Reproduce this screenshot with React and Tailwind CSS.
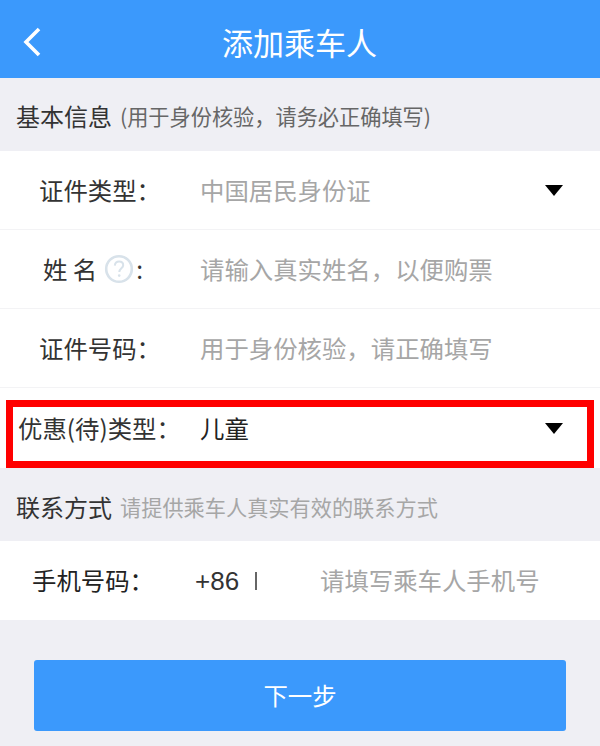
const font = "font-['Noto_Sans_CJK_SC','Noto_Sans',sans-serif]";

function Caret() {
  return (
    <svg width="18" height="11" viewBox="0 0 18 11" className="shrink-0">
      <path d="M0 0H18L9 11Z" fill="#000" />
    </svg>
  );
}

function Help() {
  return (
    <svg width="30" height="30" viewBox="0 0 30 30" className="shrink-0">
      <circle cx="15" cy="15" r="12.8" fill="none" stroke="#d8e2ea" strokeWidth="2.6" />
      <path d="M10.8 11.6c.3-2.6 2-4 4.3-4 2.4 0 4.1 1.5 4.1 3.6 0 3-3.7 3.3-3.9 6.8" fill="none" stroke="#d8e2ea" strokeWidth="2" />
      <circle cx="15.2" cy="21.6" r="1.3" fill="#d8e2ea" />
    </svg>
  );
}

export default function App() {
  return (
    <div className={`${font} flex h-[746px] w-[600px] flex-col overflow-hidden bg-[#efeff4] leading-none`}>
      <header className="flex h-[78px] items-center bg-[#3b99fc] text-white">
        <svg width="20" height="30" viewBox="0 0 20 30" className="ml-[22px] mt-[6px] shrink-0">
          <path d="M17 2 L4 15 L17 28" fill="none" stroke="#fff" strokeWidth="3.6" />
        </svg>
        <h1 className="mt-[4px] ml-[3px] flex-1 pr-[46px] text-center text-[31px] font-normal">添加乘车人</h1>
      </header>

      <div className="flex h-[73px] items-center pl-[16px] pt-[2px]">
        <span className="text-[24px] text-[#333]">基本信息</span>
        <span className="ml-[8px] text-[21.2px] text-[#666]">(用于身份核验，请务必正确填写)</span>
      </div>

      <div className="flex h-[79px] items-center border-b border-[#f3f3f5] bg-white pr-[37px] text-[24.4px]">
        <span className="ml-[39px] w-[161px] text-[#333]">证件类型：</span>
        <span className="flex-1 text-[#a6a6a6]">中国居民身份证</span>
        <Caret />
      </div>

      <div className="flex h-[79px] items-center border-b border-[#f3f3f5] bg-white text-[24.4px]">
        <span className="ml-[43px] flex w-[157px] items-center text-[#333]">
          姓 名<span className="ml-[7px]"><Help /></span><span className="ml-[2px]">:</span>
        </span>
        <span className="text-[#a6a6a6]">请输入真实姓名，以便购票</span>
      </div>

      <div className="flex h-[79px] items-center border-b border-[#f3f3f5] bg-white text-[24.4px]">
        <span className="ml-[39px] w-[161px] text-[#333]">证件号码：</span>
        <span className="text-[#a6a6a6]">用于身份核验，请正确填写</span>
      </div>

      <div className="bg-white px-[6px] pt-[12px]">
        <div className="flex h-[68px] items-center border-[7px] border-[#ff0000] bg-white pb-[12px] pr-[24px] text-[24.4px]">
          <span className="ml-[5px] w-[182px] text-[#333]">优惠(待)类型：</span>
          <span className="flex-1 text-[#222]">儿童</span>
          <Caret />
        </div>
      </div>

      <div className="flex h-[73px] items-center pl-[16px] pt-[5px]">
        <span className="text-[24px] text-[#333]">联系方式</span>
        <span className="ml-[8px] text-[21.2px] text-[#a6a6a6]">请提供乘车人真实有效的联系方式</span>
      </div>

      <div className="flex h-[79px] items-center bg-white text-[24.4px]">
        <span className="ml-[32px] w-[163px] text-[#222]">手机号码：</span>
        <span className="w-[60px] font-['Liberation_Sans',sans-serif] text-[26px] text-[#333]">+86</span>
        <span className="h-[18px] w-[2px] bg-[#666]" />
        <span className="ml-[63px] text-[#a6a6a6]">请填写乘车人手机号</span>
      </div>

      <button className="mx-auto mt-[40px] h-[71px] w-[532px] rounded-[3px] bg-[#3b99fc] text-[24.4px] text-white">下一步</button>
    </div>
  );
}
